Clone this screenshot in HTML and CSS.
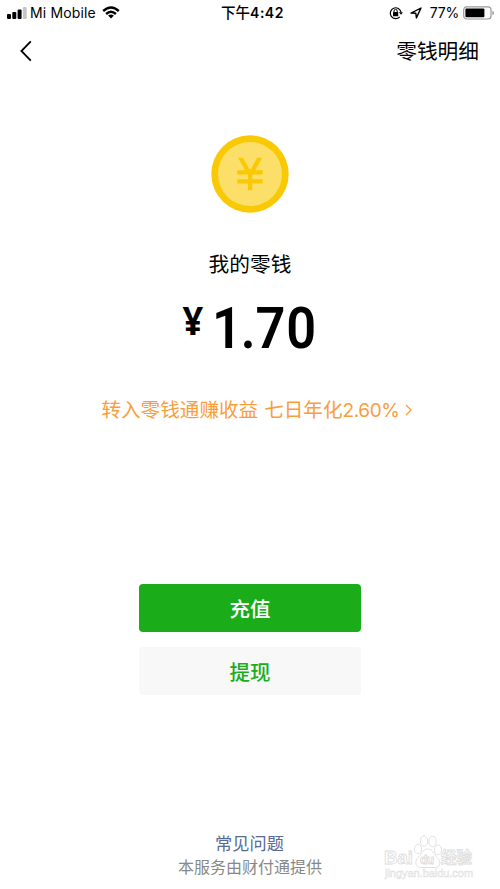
FILE: index.html
```html
<!DOCTYPE html>
<html lang="zh-CN">
<head>
<meta charset="utf-8">
<title>我的零钱</title>
<link rel="stylesheet" href="styles.css">
</head>
<body>
<div class="status">
  <div class="status-left">
    <svg class="signal" width="20" height="13" viewBox="0 0 20 13"><rect x="0" y="8" width="4" height="5" rx="1"/><rect x="5.3" y="6" width="4" height="7" rx="1"/><rect x="10.6" y="3.5" width="4" height="9.5" rx="1"/><rect x="15.9" y="1" width="3.8" height="12" rx="1" fill="#c6c6c6"/></svg>
    <span class="carrier">Mi Mobile</span>
    <svg class="wifi" width="18" height="13" viewBox="0 0 18 13"><g fill="none" stroke="#000" stroke-width="2.4"><path d="M1.2 5Q9-1.9 16.8 5"/><path d="M4.1 8Q9 3.6 13.9 8"/></g><path d="M6.1 9.6Q9 7.3 11.9 9.6L9 12.6Z"/></svg>
  </div>
  <div class="time">下午<b>4:42</b></div>
  <div class="status-right">
    <svg width="14" height="14" viewBox="0 0 14 14"><path d="M10.7 10.8A5.4 5.4 0 1 1 12 6.2" fill="none" stroke="#000" stroke-width="1.2"/><path d="M9.9 6.2H14L12 8.8Z"/><rect x="4" y="6" width="5.2" height="4.2" rx=".5"/><path d="M5 6.2V5a1.6 1.6 0 0 1 3.2 0v1.2" fill="none" stroke="#000" stroke-width="1"/></svg>
    <svg class="location" width="12" height="12" viewBox="0 0 12 12"><path d="M1 6.1L11 1 6.4 10.9 5.8 6.2Z" fill="none" stroke="#000" stroke-width="1.4" stroke-linejoin="round"/></svg>
    <span class="percent">77%</span>
    <svg class="battery" width="32" height="14" viewBox="0 0 32 14"><rect x=".7" y=".8" width="27.3" height="12.2" rx="3" fill="none" stroke="#999" stroke-width="1.2"/><rect x="2.4" y="2.5" width="19" height="8.8" rx="1"/><path d="M29.4 4.8Q31 5.3 31 7T29.4 9.2Z" fill="#999"/></svg>
  </div>
</div>
<header class="nav">
  <svg width="12" height="22" viewBox="0 0 12 22"><path d="M10.8 1.3L1.4 11l9.4 9.7" fill="none" stroke="#000" stroke-width="1.8"/></svg>
  <span class="detail">零钱明细</span>
</header>
<main class="wallet">
  <svg class="coin" width="78" height="78" viewBox="0 0 78 78"><circle cx="39" cy="39" r="38.7" fill="#fac905"/><circle cx="39" cy="39" r="32" fill="#fcdf68"/><path d="M27 22.8h5L39.1 35.5 46.2 22.8h5L42.8 37.5H35.4Z M26.2 35.2H51.7v4.3H26.2ZM26.2 44.3H51.7v4.2H26.2ZM37 34h4.3V55.2H37Z" fill="#fac905"/></svg>
  <h1 class="title">我的零钱</h1>
  <svg class="amount" width="140" height="60" viewBox="0 0 140 60">
    <text class="yen" transform="scale(.93 1)" x="2.6" y="36.5">¥</text>
    <text class="value" transform="scale(.9 1)" x="35.6 67.4 84 118" y="50.4">1.70</text>
  </svg>
  <div class="promo"><span class="promo-text">转入零钱通赚收益</span><span class="promo-rate">七日年化<span class="rate">2.60%</span></span><svg width="7" height="12" viewBox="0 0 7 12"><path d="M1 1l5 5-5 5" fill="none" stroke="#fa9d3b" stroke-width="1.3"/></svg></div>
  <div class="button primary">充值</div>
  <div class="button secondary">提现</div>
</main>
<footer class="footer">
  <div class="faq">常见问题</div>
  <div class="provider">本服务由财付通提供</div>
</footer>
<svg class="watermark" width="100" height="52" viewBox="0 0 100 52">
  <g fill="#fff" stroke="#dedede" stroke-width=".9">
    <ellipse cx="38" cy="20" rx="3.6" ry="4.8"/><ellipse cx="44" cy="12" rx="3.7" ry="5.2"/><ellipse cx="52.5" cy="12.5" rx="3.7" ry="5.2"/><ellipse cx="58" cy="21" rx="3.6" ry="4.8"/>
    <path d="M47.5 20C42 20 42 26 37.5 29C34 33 36 38.5 41 38.5H55C61 38 61 32 57.5 28.5C53 25 53 20 47.5 20Z"/>
    <text class="wm-brand" x="4" y="35" textLength="29" lengthAdjust="spacingAndGlyphs">Bai</text>
    <text class="wm-du" x="40" y="35" textLength="14">du</text>
    <text class="wm-cn" x="61" y="34" textLength="31">经验</text>
    <text class="wm-url" x="5" y="47.5" textLength="88" lengthAdjust="spacingAndGlyphs">jingyan.baidu.com</text>
  </g>
</svg>
</body>
</html>
```
FILE: styles.css
```css
* { box-sizing: border-box; }
body {
  margin: 0;
  height: 889px;
  position: relative;
  overflow: hidden;
  display: flex;
  flex-direction: column;
  background: #fff;
  color: #000;
  font-family: Inter, "Noto Sans CJK SC", sans-serif;
}
svg { display: block; flex: none; overflow: visible; }
.status {
  height: 25px;
  padding: 0 5px 0 7px;
  display: grid;
  grid-template-columns: 1fr auto 1fr;
  align-items: center;
  font-size: 14px;
  line-height: 24px;
}
.status-left, .status-right { display: flex; align-items: center; }
.status-right { justify-content: flex-end; }
.carrier { margin-left: 3px; letter-spacing: .15px; }
.wifi { margin-left: 6px; }
.time { padding-left: 3px; font-size: 14.5px; font-weight: 500; white-space: nowrap; }
.time b { font-weight: 600; font-size: 14px; letter-spacing: .5px; }
.location { margin-left: 7px; }
.percent { margin-left: 8px; letter-spacing: -.2px; }
.battery { margin-left: 4px; }
.nav {
  height: 52px;
  padding: 0 21px 0 20px;
  display: flex;
  align-items: center;
  justify-content: space-between;
}
.detail { padding-top: 2px; font-size: 20.7px; line-height: 30px; }
.wallet { display: flex; flex-direction: column; align-items: center; }
.coin { margin-top: 58px; }
.title { margin: 37px 0 0; font-size: 20.7px; font-weight: 400; line-height: 30px; }
.amount { margin-top: 18px; }
.yen { font: 700 39px "Noto Sans", sans-serif; }
.value { font: 600 58.2px Roboto, sans-serif; }
.promo {
  margin: 37px 0 0 13px;
  height: 30px;
  display: flex;
  align-items: center;
  color: #fa9d3b;
  font-size: 19.6px;
  line-height: 30px;
}
.promo-rate { margin-left: 6px; }
.rate { font-size: 19px; letter-spacing: -.4px; }
.promo svg { margin-left: 5px; }
.button {
  width: 222px;
  height: 48px;
  border-radius: 4px;
  text-align: center;
  font-size: 20.5px;
  font-weight: 500;
  line-height: 51px;
}
.primary { margin-top: 159.4px; background: #1aad19; color: #fff; }
.secondary { margin-top: 15px; background: #f8f8f8; color: #1aad19; }
.footer { margin-top: auto; padding-bottom: 11px; text-align: center; }
.faq { padding-right: 1px; color: #576b95; font-size: 17.2px; line-height: 24px; }
.provider { color: #888; font-size: 16px; line-height: 22px; }
.watermark { position: absolute; left: 380px; top: 829px; }
.wm-brand { font: 700 19px "Liberation Sans", sans-serif; }
.wm-du { font: 700 12px "Liberation Sans", sans-serif; }
.wm-cn { font: 700 15.5px "Noto Sans CJK SC", sans-serif; }
.wm-url { font: 400 10px "Liberation Sans", sans-serif; stroke-width: .5px; }
```
